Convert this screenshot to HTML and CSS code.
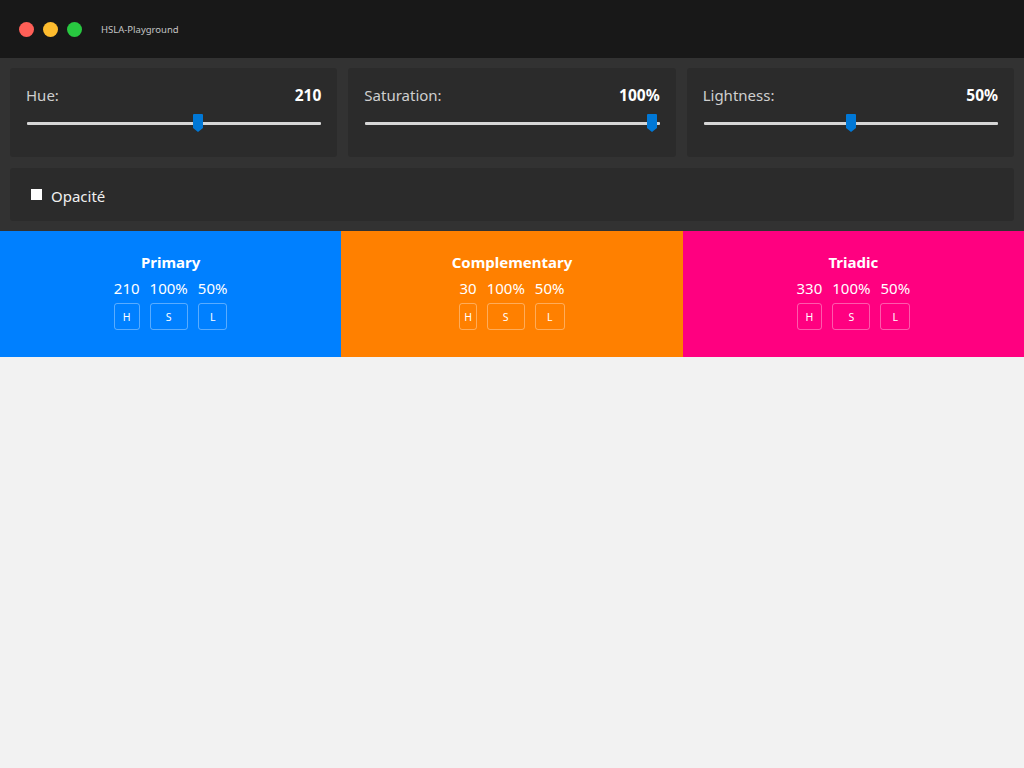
FILE: index.html
```html
<!DOCTYPE html>
<html lang="fr">
<head>
<meta charset="utf-8">
<title>HSLA-Playground</title>
<link rel="stylesheet" href="styles.css">
</head>
<body>
<div class="window">
  <header class="titlebar">
    <div class="lights">
      <span class="light red"></span>
      <span class="light yellow"></span>
      <span class="light green"></span>
    </div>
    <span class="title">HSLA-Playground</span>
  </header>

  <section class="controls">
    <div class="sliders">
      <div class="panel">
        <div class="row"><span class="label">Hue:</span><span class="value">210</span></div>
        <div class="slider">
          <div class="track"></div>
          <div class="rail">
            <svg class="thumb" style="left: 58.3%" width="10" height="18" viewBox="0 0 10 18"><path d="M1 0H9a1 1 0 0 1 1 1V14L5 18L0 14V1a1 1 0 0 1 1-1Z" fill="#0078d7"/></svg>
          </div>
        </div>
      </div>
      <div class="panel">
        <div class="row"><span class="label">Saturation:</span><span class="value">100%</span></div>
        <div class="slider">
          <div class="track"></div>
          <div class="rail">
            <svg class="thumb" style="left: 99%" width="10" height="18" viewBox="0 0 10 18"><path d="M1 0H9a1 1 0 0 1 1 1V14L5 18L0 14V1a1 1 0 0 1 1-1Z" fill="#0078d7"/></svg>
          </div>
        </div>
      </div>
      <div class="panel">
        <div class="row"><span class="label">Lightness:</span><span class="value">50%</span></div>
        <div class="slider">
          <div class="track"></div>
          <div class="rail">
            <svg class="thumb" style="left: 50%" width="10" height="18" viewBox="0 0 10 18"><path d="M1 0H9a1 1 0 0 1 1 1V14L5 18L0 14V1a1 1 0 0 1 1-1Z" fill="#0078d7"/></svg>
          </div>
        </div>
      </div>
    </div>
    <div class="panel opacity">
      <span class="checkbox"></span>
      <span class="opacity-label">Opacité</span>
    </div>
  </section>

  <section class="swatches">
    <div class="swatch primary">
      <div class="swatch-title">Primary</div>
      <div class="comps">
        <div class="comp"><span>210</span><button class="btn">H</button></div>
        <div class="comp"><span>100%</span><button class="btn">S</button></div>
        <div class="comp"><span>50%</span><button class="btn">L</button></div>
      </div>
    </div>
    <div class="swatch complementary">
      <div class="swatch-title">Complementary</div>
      <div class="comps">
        <div class="comp"><span>30</span><button class="btn">H</button></div>
        <div class="comp"><span>100%</span><button class="btn">S</button></div>
        <div class="comp"><span>50%</span><button class="btn">L</button></div>
      </div>
    </div>
    <div class="swatch triadic">
      <div class="swatch-title">Triadic</div>
      <div class="comps">
        <div class="comp"><span>330</span><button class="btn">H</button></div>
        <div class="comp"><span>100%</span><button class="btn">S</button></div>
        <div class="comp"><span>50%</span><button class="btn">L</button></div>
      </div>
    </div>
  </section>
</div>
</body>
</html>
```

FILE: styles.css
```css
* { box-sizing: border-box; }

html, body {
  margin: 0;
  padding: 0;
  height: 100%;
}

body {
  background: #f2f2f2;
  font-family: "Noto Sans", "Open Sans", sans-serif;
  color: #fff;
}

.titlebar {
  height: 58px;
  background: #181818;
  display: flex;
  align-items: center;
  padding-left: 19px;
}

.lights {
  display: flex;
  gap: 9px;
}

.light {
  width: 15px;
  height: 15px;
  border-radius: 50%;
  display: block;
}
.light.red { background: #ff5f57; }
.light.yellow { background: #febc2e; }
.light.green { background: #28c840; }

.title {
  margin-left: 19px;
  font-size: 9.5px;
  color: #c4c4c4;
}

.controls {
  background: #323232;
  padding: 10px;
  display: flex;
  flex-direction: column;
  gap: 11px;
}

.sliders {
  display: grid;
  grid-template-columns: 1fr 1fr 1fr;
  gap: 11px;
}

.panel {
  background: #2b2b2b;
  border-radius: 3px;
}

.sliders .panel {
  height: 89px;
  padding: 16px 16px 0 16px;
}

.row {
  display: flex;
  justify-content: space-between;
  align-items: center;
  height: 22px;
}

.label {
  font-size: 15px;
  color: #cfcfcf;
}

.value {
  font-size: 15.5px;
  font-weight: 700;
  color: #fff;
}

.slider {
  position: relative;
  margin-top: 8px;
  height: 18px;
  margin-left: 1px;
}

.track {
  position: absolute;
  left: 0;
  right: 0;
  top: 8px;
  height: 3px;
  background: #d6d6d6;
  border-radius: 1px;
}

.rail {
  position: absolute;
  left: 5px;
  right: 5px;
  top: 0;
  bottom: 0;
}

.thumb {
  position: absolute;
  top: 0;
  margin-left: -5px;
  display: block;
}

.opacity {
  height: 53px;
  display: flex;
  align-items: center;
  padding-left: 21px;
  gap: 9px;
}

.checkbox {
  width: 11px;
  height: 11px;
  background: #fff;
  display: block;
}

.opacity-label {
  font-size: 15px;
  color: #f0f0f0;
  margin-top: 3px;
}

.swatches {
  display: grid;
  grid-template-columns: 1fr 1fr 1fr;
}

.swatch {
  height: 126px;
  display: flex;
  flex-direction: column;
  align-items: center;
  padding-top: 20px;
}

.primary { background: #0080ff; }
.complementary { background: #ff8000; }
.triadic { background: #ff0080; }

.swatch-title {
  font-size: 15px;
  font-weight: 700;
  line-height: 22px;
}

.comps {
  display: flex;
  gap: 10px;
  margin-top: 4px;
}

.comp {
  display: flex;
  flex-direction: column;
  align-items: stretch;
}

.comp span {
  font-size: 15px;
  line-height: 22px;
  text-align: center;
}

.btn {
  margin-top: 4px;
  height: 27px;
  background: transparent;
  border: 1px solid rgba(255, 255, 255, 0.35);
  border-radius: 3px;
  color: #fff;
  font-family: "Noto Sans", sans-serif;
  font-size: 10.5px;
  padding: 0;
}
```
